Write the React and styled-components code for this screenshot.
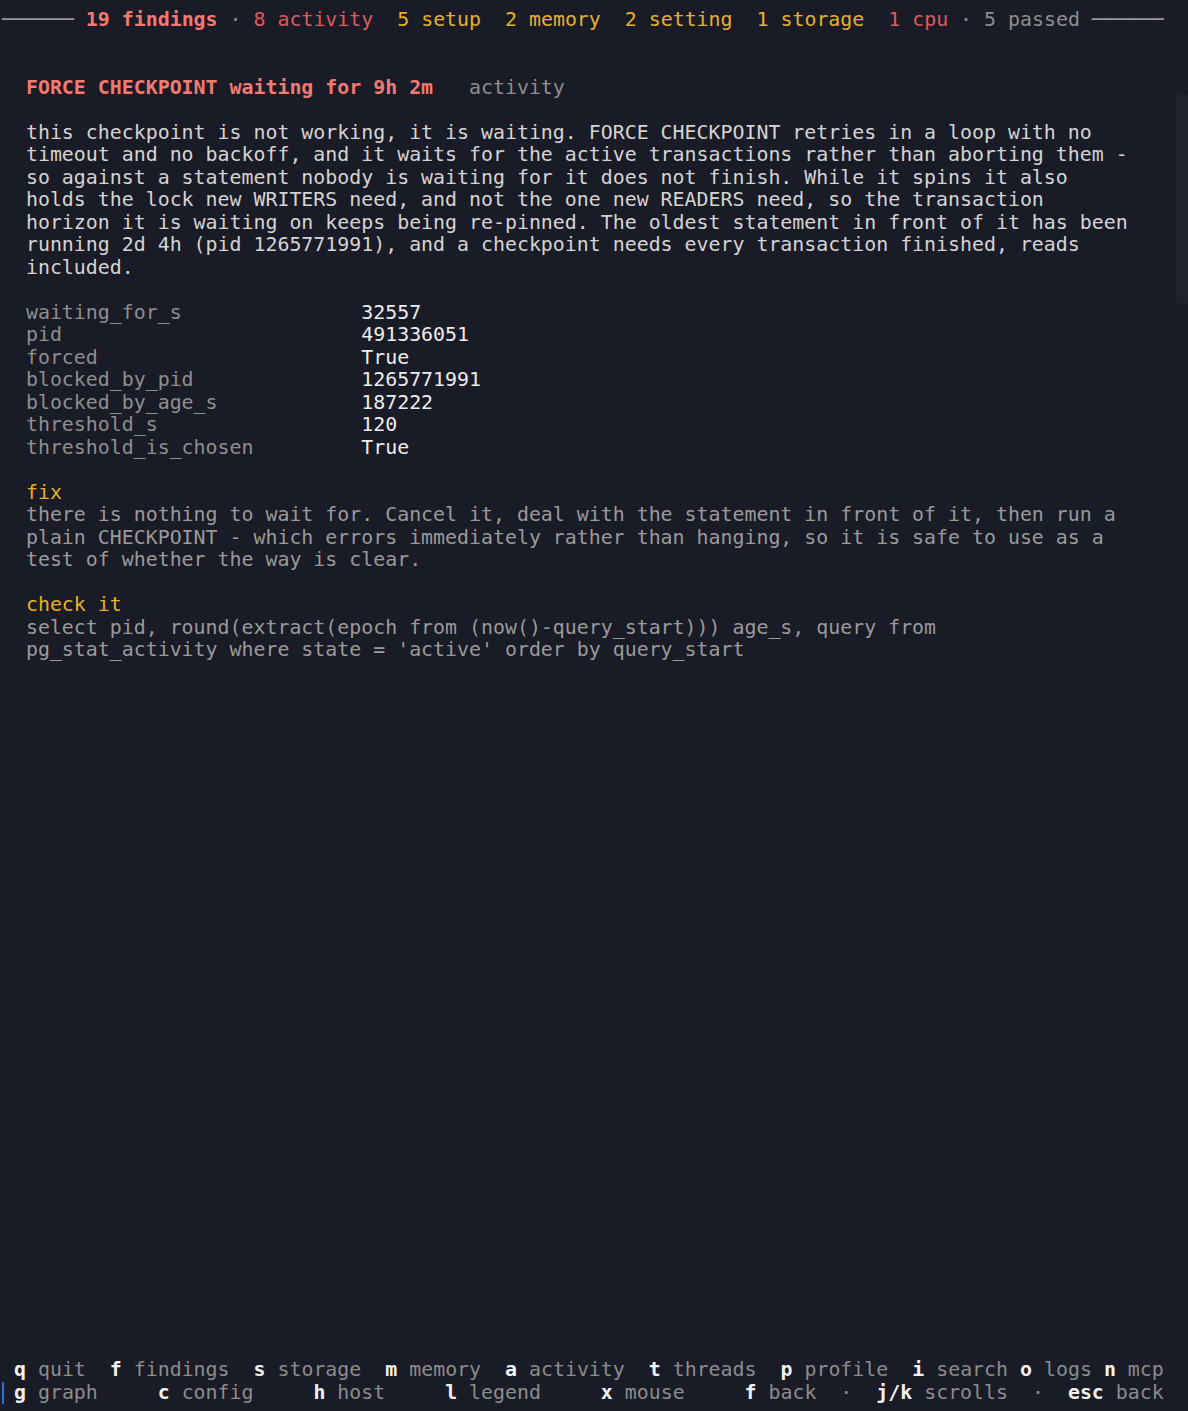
import styled, { createGlobalStyle } from 'styled-components';

const GlobalStyle = createGlobalStyle`
  html, body {
    margin: 0;
    padding: 0;
    background: #191b26;
  }

  * {
    box-sizing: border-box;
  }
`;

const Screen = styled.div`
  position: relative;
  display: flex;
  flex-direction: column;
  height: 1411px;
  padding: 9px 0 7px 2px;
  overflow: hidden;
  background: #191b26;
  color: #d4d4d4;
  font-family: "DejaVu Sans Mono", "Liberation Mono", monospace;
  font-size: 19.9px;
  line-height: 22.5px;
  white-space: pre;
`;

const Line = styled.div`
  height: 22.5px;
  color: ${(props) => props.color || 'inherit'};
`;

const Main = styled.main`
  flex: 1;
  display: flex;
  flex-direction: column;
`;

const Section = styled.section`
  display: flex;
  flex-direction: column;
  margin-top: ${(props) => (props.gap ? '22.5px' : '0')};
  padding-left: 2ch;
`;

const Span = styled.span`
  color: ${(props) => props.color || 'inherit'};
  font-weight: ${(props) => (props.bold ? 700 : 400)};
`;

const Rule = styled.span`
  color: #9a9a9a;
`;

const KvTable = styled.div`
  display: grid;
  grid-template-columns: 28ch auto;
  margin-top: 22.5px;
  padding-left: 2ch;
`;

const Key = styled.div`
  height: 22.5px;
  color: #8e8e8e;
`;

const Value = styled.div`
  height: 22.5px;
  color: #ececec;
`;

const Heading = styled.div`
  height: 22.5px;
  color: #e6b02c;
`;

const Muted = styled.div`
  height: 22.5px;
  color: #9a9a9a;
`;

const Footer = styled.footer`
  display: flex;
  flex-direction: column;
`;

const FooterRow = styled.div`
  height: 22.5px;
  padding-left: 1ch;
  box-shadow: ${(props) => (props.$cursor ? 'inset 2px 0 0 #2f6fd6' : 'none')};
  margin-left: -2px;
  border-left: 2px solid transparent;
`;

const KeyCap = styled.span`
  color: #f2f2f2;
  font-weight: 700;
`;

const Label = styled.span`
  color: #8c8c8c;
`;

const ScrollThumb = styled.div`
  position: absolute;
  top: 93px;
  right: 0;
  width: 12px;
  height: 212px;
  border-radius: 6px;
  background: #20232c;
`;

const RED = '#f27a70';
const DARK_RED = '#dd5a5c';
const YELLOW = '#e6b02c';
const GREY = '#8e8e8e';

const summary = [
  { text: '8 activity', color: DARK_RED },
  { text: '5 setup', color: YELLOW },
  { text: '2 memory', color: YELLOW },
  { text: '2 setting', color: YELLOW },
  { text: '1 storage', color: YELLOW },
  { text: '1 cpu', color: DARK_RED },
];

const body = [
  'this checkpoint is not working, it is waiting. FORCE CHECKPOINT retries in a loop with no',
  'timeout and no backoff, and it waits for the active transactions rather than aborting them -',
  'so against a statement nobody is waiting for it does not finish. While it spins it also',
  'holds the lock new WRITERS need, and not the one new READERS need, so the transaction',
  'horizon it is waiting on keeps being re-pinned. The oldest statement in front of it has been',
  'running 2d 4h (pid 1265771991), and a checkpoint needs every transaction finished, reads',
  'included.',
];

const details = [
  ['waiting_for_s', '32557'],
  ['pid', '491336051'],
  ['forced', 'True'],
  ['blocked_by_pid', '1265771991'],
  ['blocked_by_age_s', '187222'],
  ['threshold_s', '120'],
  ['threshold_is_chosen', 'True'],
];

const fix = [
  'there is nothing to wait for. Cancel it, deal with the statement in front of it, then run a',
  'plain CHECKPOINT - which errors immediately rather than hanging, so it is safe to use as a',
  'test of whether the way is clear.',
];

const check = [
  "select pid, round(extract(epoch from (now()-query_start))) age_s, query from",
  "pg_stat_activity where state = 'active' order by query_start",
];

const shortcuts = [
  [['q', 'quit', '  '], ['f', 'findings', '  '], ['s', 'storage', '  '], ['m', 'memory', '  '],
    ['a', 'activity', '  '], ['t', 'threads', '  '], ['p', 'profile', '  '], ['i', 'search', ' '],
    ['o', 'logs', ' '], ['n', 'mcp', '']],
  [['g', 'graph', '     '], ['c', 'config', '     '], ['h', 'host', '     '], ['l', 'legend', '     '],
    ['x', 'mouse', '     '], ['f', 'back', '  ·  '], ['j/k', 'scrolls', '  ·  '], ['esc', 'back', '']],
];

function SummaryBar() {
  return (
    <Line>
      <Rule>{'────── '}</Rule>
      <Span color={RED} bold>19 findings</Span>
      <Span color={GREY}>{' · '}</Span>
      {summary.map((item, i) => (
        <Span key={item.text} color={item.color}>
          {i > 0 ? '  ' : ''}
          {item.text}
        </Span>
      ))}
      <Span color={GREY}>{' · 5 passed '}</Span>
      <Rule>──────</Rule>
    </Line>
  );
}

export default function App() {
  return (
    <>
      <GlobalStyle />
      <Screen>
        <Main>
          <SummaryBar />
          <Line />
          <Line>{' '}</Line>
          <Section>
            <Line>
              <Span color={RED} bold>FORCE CHECKPOINT waiting for 9h 2m</Span>
              <Span color={GREY}>{'   activity'}</Span>
            </Line>
          </Section>
          <Section gap>
            {body.map((text) => (
              <Line key={text}>{text}</Line>
            ))}
          </Section>
          <KvTable>
            {details.flatMap(([key, value]) => [
              <Key key={`k-${key}`}>{key}</Key>,
              <Value key={`v-${key}`}>{value}</Value>,
            ])}
          </KvTable>
          <Section gap>
            <Heading>fix</Heading>
            {fix.map((text) => (
              <Muted key={text}>{text}</Muted>
            ))}
          </Section>
          <Section gap>
            <Heading>check it</Heading>
            {check.map((text) => (
              <Muted key={text}>{text}</Muted>
            ))}
          </Section>
        </Main>
        <Footer>
          {shortcuts.map((row, r) => (
            <FooterRow key={r} $cursor={r === 1}>
              {row.map(([cap, label, sep]) => (
                <span key={cap + label}>
                  <KeyCap>{cap}</KeyCap>
                  <Label>{` ${label}${sep}`}</Label>
                </span>
              ))}
            </FooterRow>
          ))}
        </Footer>
        <ScrollThumb />
      </Screen>
    </>
  );
}
